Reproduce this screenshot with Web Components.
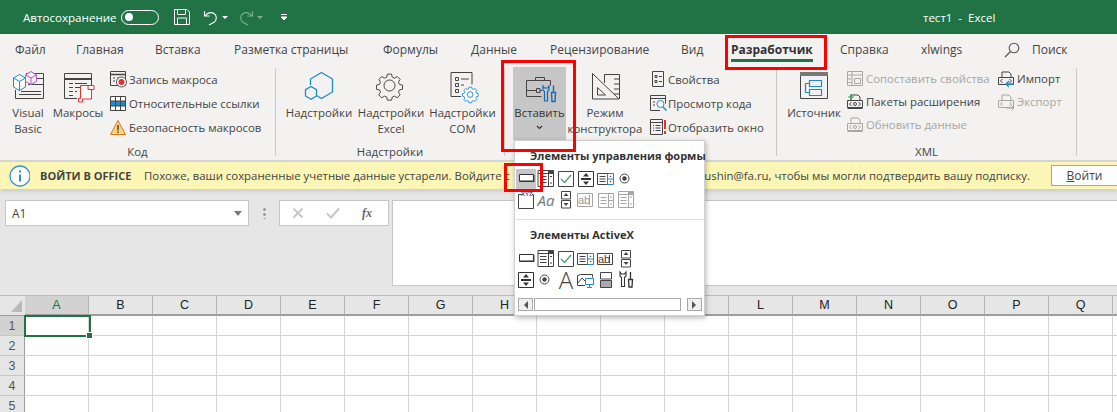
<!DOCTYPE html>
<html lang="ru">
<head>
<meta charset="utf-8">
<title>тест1 - Excel</title>
<style>
  html, body { margin: 0; height: 412px; overflow: hidden; background: #e6e6e6; }
  body { font-family: "Open Sans", "Liberation Sans", sans-serif; position: relative; display: flex; flex-direction: column; }
</style>
</head>
<body>
<x-titlebar></x-titlebar>
<x-tabs></x-tabs>
<x-ribbon>
  <x-group label="Код" style="width:276px;padding-left:6px">
    <x-big style="width:44px"><x-icon slot="icon" name="vb" size="34"></x-icon>Visual<br>Basic</x-big>
    <x-big style="width:56px"><x-icon slot="icon" name="macros" size="34"></x-icon>Макросы</x-big>
    <x-list style="margin-left:4px">
      <x-small icon="record">Запись макроса</x-small>
      <x-small icon="relative">Относительные ссылки</x-small>
      <x-small icon="warn">Безопасность макросов</x-small>
    </x-list>
  </x-group>
  <x-group label="Надстройки" style="width:229px;padding-left:7px">
    <x-big style="width:72px"><x-icon slot="icon" name="addin" size="34"></x-icon>Надстройки</x-big>
    <x-big style="width:72px"><x-icon slot="icon" name="gear" size="34"></x-icon>Надстройки<br>Excel</x-big>
    <x-big style="width:71px"><x-icon slot="icon" name="com" size="34"></x-icon>Надстройки<br>COM</x-big>
  </x-group>
  <x-group label="" style="width:272px;padding-left:8px">
    <x-big active style="width:53px"><x-icon slot="icon" name="toolbox" size="34"></x-icon>Вставить<x-chevron></x-chevron></x-big>
    <x-big style="width:78px"><x-icon slot="icon" name="ruler" size="34"></x-icon>Режим<br>конструктора</x-big>
    <x-list style="margin-left:6px">
      <x-small icon="props" tight>Свойства</x-small>
      <x-small icon="viewcode" tight>Просмотр кода</x-small>
      <x-small icon="dialog" tight>Отобразить окно</x-small>
    </x-list>
  </x-group>
  <x-group label="XML" style="width:300px;padding-left:4px">
    <x-big style="width:66px"><x-icon slot="icon" name="source" size="34"></x-icon>Источник</x-big>
    <x-list dense style="width:151px">
      <x-small icon="mapprops" off>Сопоставить свойства</x-small>
      <x-small icon="packs">Пакеты расширения</x-small>
      <x-small icon="refresh" off>Обновить данные</x-small>
    </x-list>
    <x-list dense>
      <x-small icon="import">Импорт</x-small>
      <x-small icon="export" off>Экспорт</x-small>
    </x-list>
  </x-group>
</x-ribbon>
<x-msgbar></x-msgbar>
<x-formulabar></x-formulabar>
<x-sheet></x-sheet>
<x-dropdown></x-dropdown>
<x-mark style="left:725px;top:35px;width:96px;height:29px"></x-mark>
<x-mark style="left:501px;top:60px;width:69px;height:86px"></x-mark>
<x-mark style="left:504px;top:163px;width:33px;height:23px"></x-mark>

<script>
const S = 'fill="none" stroke="#444" stroke-width="1"';
const G = 'fill="none" stroke="#a6a6a6" stroke-width="1"';
const ICONS = {
  vb: `<g ${S}><path d="M15 2.500h17.500v25H4.500V19"/><path d="M26 7.500h6.500M17 13.500h15M8 23.500h22M10 20.500h20"/></g>
       <path d="M2.500 7l6-3.500 6 3.500v9l-6 3.500-6-3.500zM2.500 7l6 3.500 6-3.500M8.500 10.500v9" fill="#fff" stroke="#1e8bcd"/>
       <path d="M14.500 4L20 .5 25.500 4v6.500l-5.500 3-5.500-3zM14.500 4l5.500 3 5.500-3M20 7v6.500" fill="#f3f2f1" stroke="#b458c4"/>`,
  macros: `<g ${S}><path d="M16 27.500H3.500V2.500h27v12"/><path d="M3.500 8h27" stroke-width="2"/><path d="M8 12.500h4M14 12.500h12M8 16.500h4M14 16.500h7M8 20.500h4M14 20.500h2M8 24.500h4"/></g>
       <path d="M19.500 14.500h13.500v4h-2.500v9.500h-9v3h-4v-3.500h2zM27 14.500v4h6" fill="#fff" stroke="#e8322c"/>`,
  record: `<g ${S}><path d="M.5 .5h15v14h-15z"/><path d="M.5 3.500h15" stroke-width="1.500"/><path d="M3 7h2M3 10h2M7 7h3"/></g><circle cx="11.500" cy="11" r="5" fill="#fff" stroke="#555"/><circle cx="11.500" cy="11" r="3" fill="#e8322c"/>`,
  relative: `<path d="M.5 1.500h15v14H.5z" fill="#fff"/><path d="M.5 6h15v5H.5z" fill="#1e8bcd"/><path d="M.5 1.500h15v14H.5zM.5 6h15M.5 11h15M5.500 1.500v14M10.500 1.500v14" fill="none" stroke="#444"/>`,
  warn: `<path d="M8 1.500l7.500 14H.5z" fill="#fcd77f" stroke="#d67a1c" stroke-linejoin="round"/><path d="M8 6v5.500M8 12.500v1.500" stroke="#444" stroke-width="1.500"/>`,
  addin: `<path d="M19.500 1.500l11 6.500v13l-11 6.500-5.500-3.200M8.500 14V8l11-6.500" fill="none" stroke="#1e8bcd" stroke-width="1.300"/><path d="M9 15.500l5.500 3.200v6.300L9 28.200 3.500 25v-6.300z" fill="#f3f2f1" stroke="#1e8bcd" stroke-width="1.300"/>`,
  gear: `<path d="M14.500 3.500h5l.8 3.700 2.700 1.100 3.200-2 3.500 3.500-2 3.200 1.100 2.700 3.700.8v5l-3.700.8-1.100 2.700 2 3.200-3.500 3.500-3.200-2-2.700 1.100-.8 3.700h-5l-.8-3.700-2.700-1.100-3.200 2-3.500-3.500 2-3.200-1.100-2.700-3.700-.8v-5l3.700-.8 1.100-2.700-2-3.200 3.500-3.500 3.200 2 2.700-1.100z" transform="translate(1.200 .2) scale(.84)" fill="none" stroke="#444" stroke-width="1.150"/><circle cx="15.500" cy="14.500" r="5.500" fill="none" stroke="#444"/>`,
  com: `<g ${S}><path d="M15 25.500H5V1.500h21v12"/><path d="M9.500 6.500h3v3h-3zM9.500 12.500h3v3h-3zM9.500 18.500h3v3h-3zM15 8h8M15 14h3"/></g>
       <path d="M22.500 15.500h3l.5 2 1.500.6 1.800-1 2 2-1 1.800.6 1.500 2 .5v3l-2 .5-.6 1.500 1 1.800-2 2-1.800-1-1.500.6-.5 2h-3l-.5-2-1.500-.6-1.800 1-2-2 1-1.800-.6-1.500-2-.5v-3l2-.5.6-1.500-1-1.800 2-2 1.800 1 1.500-.6z" transform="translate(3.200 2.500) scale(.88)" fill="#fff" stroke="#1e8bcd"/><circle cx="24.200" cy="23.500" r="2.800" fill="none" stroke="#1e8bcd"/>`,
  toolbox: `<g ${S}><path d="M3.500 9.500h24v5M3.500 9.500v16h15"/><path d="M12.500 9.500v-3h9v3"/><path d="M13.500 17.500h3.500v4h-3.500zM3.500 19.500h10M17 19.500h2"/></g>
       <path d="M20 15v4l1.500 1.500V30h3V20.500L26 19v-4l-1.500 2h-3z" fill="#c6c6c6" stroke="#0f6cbd" stroke-width="1.200"/>
       <path d="M30.500 14.500v7M28.500 21.500h4l-.5 9h-3z" fill="#c6c6c6" stroke="#0f6cbd" stroke-width="1.400"/>`,
  ruler: `<g ${S}><path d="M4.500 2.500L31 28H4.500z"/><path d="M9.500 16.500l8 7.500h-8z"/><path d="M16.500 12V3.500h15V28M26 8h5.500M26 13h5.500M26 18h5.500M26 23h5.500"/></g>`,
  props: `<g ${S}><path d="M2.500 .5h11v15h-11z"/><path d="M5 4.500h2v2H5zM9 5.500h3M5 9.500h2v2H5zM9 10.500h3"/></g>`,
  viewcode: `<g ${S}><path d="M10 15.500H.5V.5h15v8"/><path d="M.5 3.500h15M3 7h2M3 10h2" /></g><circle cx="10.500" cy="9" r="3.500" fill="#fff" stroke="#1e8bcd"/><path d="M13 12l3.500 3.500" stroke="#1e8bcd" stroke-width="1.500"/>`,
  dialog: `<g ${S}><path d="M.5 .5h12v15H.5zM.5 3.500h12M3 6.500h1M5.500 6.500h5M3 9h1M5.500 9h5M3 11.500h1M5.500 11.500h5"/></g><path d="M15 1v9M15 12v3" stroke="#e8322c" stroke-width="2"/>`,
  source: `<g transform="translate(2 0)"><path d="M1.500 1.500h27v26h-27z" fill="none" stroke="#444"/><path d="M1 1h28v4H1z" fill="#777"/><path d="M10.500 9.500h12v6h-12zM10.500 18.500h12v6h-12zM10.500 12.500H6.500v9h4" fill="none" stroke="#1e8bcd" stroke-width="1.200"/></g>`,
  mapprops: `<g ${G}><path d="M.5 1.500h15v14H.5zM.5 5h15M5 1.500v14M.5 9h4M.5 12.500h4M7.500 8.500h6v5h-6z"/></g>`,
  packs: `<g ${S}><path d="M.5 7.500h15v7H.5zM4 7.500V2h7l2 2v3.500M.5 15.500h15"/><path d="M4.500 9l-2 2 2 2M11.500 9l2 2-2 2"/></g><circle cx="8" cy="11" r="1.500" fill="none" stroke="#444"/><path d="M1 4h6M4 1v6" stroke="#2e9e4f" stroke-width="1.200"/>`,
  refresh: `<g ${G}><path d="M.5 7.500h15v7H.5zM4 7.500V2h7l2 2v3.500M.5 15.500h15"/><path d="M4.500 9l-2 2 2 2M11.500 9l2 2-2 2"/></g><circle cx="8" cy="11" r="1.500" fill="none" stroke="#a6a6a6"/>`,
  import: `<g ${S}><path d="M.5 7.500h15v7H.5zM4 7.500V2h7l2 2v3.500"/><path d="M4.500 9l-2 2 2 2M11.500 9l2 2-2 2"/></g><path d="M16 14H8M11 11l-3 3 3 3" fill="none" stroke="#1e8bcd" stroke-width="1.300"/>`,
  export: `<g ${G}><path d="M.5 7.500h15v7H.5zM4 7.500V2h7l2 2v3.500"/><path d="M4.500 9l-2 2 2 2M11.500 9l2 2-2 2"/><path d="M8 15h8M13.500 12.500l2.500 2.500-2.500 2.500"/></g>`,
  save: `<path d="M.5.5h12.500l2.500 2.500v12.500H.5zM3.500.5v5h8v-5M3.500 15.500v-6.500h9v6.500" fill="none" stroke="#fff"/>`,
  undo: `<path d="M1.500 2v5h5M2 7c2-3 6-4.500 9-2.500 3 2 3 6 .5 8.500L6 16" fill="none" stroke="#fff" stroke-width="1.100"/>`,
  redo: `<path d="M14.500 2v5h-5M14 7c-2-3-6-4.500-9-2.500-3 2-3 6-.5 8.500L10 16" fill="none" stroke="#7fae96" stroke-width="1.100"/>`,
  search: `<circle cx="10" cy="6" r="4.800" fill="none" stroke="#555" stroke-width="1.100"/><path d="M6.500 9.500L1 15" stroke="#555" stroke-width="1.300"/>`,
  // form controls, 18px box
  button: `<path d="M2.500 4.500h14v7h-14z" fill="#fff" stroke="#333"/><path d="M3 11.200h13.700V5" fill="none" stroke="#333" stroke-width="1.500"/>`,
  combo: `<g ${S}><path d="M1 .5h15.500v16H1zM1 3.500h15.500M11.500 .5v16M3 6.500h6.500M3 9.500h6.500M3 12.500h6.500"/><path d="M13 6.500h2M13 13h2"/></g><path d="M11.500.5h5v3h-5z" fill="#444"/>`,
  check: `<path d="M1.500 1.500h15v15h-15z" fill="#fff" stroke="#444"/><path d="M4 9l3.500 3.500L14 5" fill="none" stroke="#4aa564" stroke-width="1.300"/>`,
  spin: `<path d="M1.500 1.500h15v15h-15z" fill="#fff" stroke="#333"/><path d="M4 9h10" stroke="#333" stroke-width="2"/><path d="M9 3l3 3.500H6zM9 15l3-3.500H6z" fill="#333"/>`,
  listb: `<g ${S}><path d="M.5 3.500h10v11H.5zM2.500 6.500h6M2.500 9h6M2.500 11.500h6"/></g><path d="M10.500 3.500h6v11h-6zM10.500 9h6" fill="none" stroke="#1e8bcd"/><path d="M12.500 7l1-1.500 1 1.500zM12.500 11l1 1.500 1-1.500z" fill="#444"/>`,
  radio: `<circle cx="7.500" cy="8.500" r="4.500" fill="none" stroke="#444"/><circle cx="7.500" cy="8.500" r="2.200" fill="#444"/>`,
  label: `<path d="M5 3.500H1.500v14h15v-14H15" fill="none" stroke="#444"/>`,
  spin2: `<g ${S}><path d="M4.500 .5h9v7.500h-9zM4.500 9.500h9v7.500h-9z"/></g><path d="M9 2l2.500 3h-5zM9 15l2.500-3h-5z" fill="#444"/>`,
  abl: `<path d="M.5 2.500h15v13H.5z" fill="none" stroke="#a6a6a6"/><path d="M12.500 4v10" stroke="#a6a6a6"/>`,
  abl2: `<path d="M.5 3.500h15v11H.5z" fill="none" stroke="#444"/><path d="M12.500 5v8" stroke="#444"/>`,
  listg: `<g ${G}><path d="M1.500 2.500h15v14h-15zM11.500 2.500v14M3.500 6.500h6M3.500 9.500h6M3.500 12.500h6M13 6h2M13 13h2M11.500 9.500h5"/></g>`,
  combog: `<g ${G}><path d="M1.500 .5h15v16h-15zM1.500 3.500h15M11.500 .5v16M3.500 6.500h6M3.500 9.500h6M3.500 12.500h6M13 6h2M13 13h2"/></g><path d="M11.500.5h5v3h-5z" fill="#a6a6a6"/>`,
  image: `<path d="M8 14.500H.5v-10l3-1h12v3" fill="none" stroke="#444"/><path d="M1 12l4-5 3 3" fill="none" stroke="#444"/><path d="M8.500 7.500h8v6h-8z" fill="#fff" stroke="#1e8bcd"/><path d="M12.500 13.500v2.500M10 16.500h5" stroke="#1e8bcd"/>`,
  toggle: `<path d="M3 9h12v7.500H3z" fill="#aaa"/><path d="M3.500 1.500h11v6.500h-11zM3.500 9.500h11v7h-11z" fill="none" stroke="#444"/>`,
  tools: `<path d="M3 1v4l1.500 1.500v9h3v-9L9 5V1L7.500 3h-3z" fill="none" stroke="#333" stroke-width="1.100"/><path d="M13.500 1v7M11.500 8.500h4l-.5 7.500h-3z" fill="none" stroke="#333" stroke-width="1.300"/>`
};

// renders an icon from the table above, box is 16px unless size says otherwise
class XIcon extends HTMLElement {
  constructor(){
    super();
    this.attachShadow({mode:'open'});
  }
  connectedCallback(){
    const box = this.getAttribute('box') || (this.getAttribute('size') || 16);
    const size = this.getAttribute('size') || 16;
    this.shadowRoot.innerHTML = `
      <style>
        :host{display:block;width:${size}px;height:${size}px;flex:none}
        svg{display:block;overflow:visible}
      </style>
      <svg width="${size}" height="${size}" viewBox="0 0 ${box} ${box}">${ICONS[this.getAttribute('name')] || ''}</svg>`;
  }
}
customElements.define('x-icon', XIcon);

class XTitlebar extends HTMLElement {
  constructor(){
    super();
    this.attachShadow({mode:'open'});
    this.shadowRoot.innerHTML = `
      <style>
        :host{display:flex;align-items:center;height:34px;background:#217346;color:#fff;font-size:11.600px;flex:none;padding-left:23px;box-sizing:border-box}
        .auto{width:98px;white-space:nowrap}
        .switch{width:38px;height:15px;border:1px solid #fff;border-radius:9px;box-sizing:border-box;margin-right:15px;display:flex;align-items:center;padding-left:3px}
        .switch i{width:8px;height:8px;border-radius:50%;background:#fff}
        .tip{width:0;height:0;border:3px solid transparent;border-top:3px solid #fff;margin-top:3px}
        .tip.dim{border-top-color:#7fae96}
        .title{margin-left:auto;width:194px;white-space:pre;font-size:11.500px}
      </style>
      <span class="auto">Автосохранение</span>
      <span class="switch"><i></i></span>
      <x-icon name="save"></x-icon>
      <x-icon name="undo" style="margin-left:13px"></x-icon>
      <span class="tip" style="margin-left:3px"></span>
      <x-icon name="redo" style="margin-left:10px"></x-icon>
      <span class="tip dim" style="margin-left:3px"></span>
      <svg width="8" height="8" style="margin-left:17px"><path d="M1 1.500h6M1 4l3 3 3-3z" fill="#fff" stroke="#fff"/></svg>
      <span class="title">тест1  -  Excel</span>`;
  }
}
customElements.define('x-titlebar', XTitlebar);

class XTabs extends HTMLElement {
  constructor(){
    super();
    this.attachShadow({mode:'open'});
    const tabs = [['Файл',61],['Главная',79],['Вставка',79],['Разметка страницы',149],['Формулы',88],['Данные',79],['Рецензирование',131],['Вид',50],['Разработчик',109],['Справка',81],['xlwings',84]];
    this.shadowRoot.innerHTML = `
      <style>
        :host{display:flex;align-items:flex-start;height:32px;background:#f3f2f1;color:#444;font-size:12px;padding:7px 0 0 15px;box-sizing:border-box;flex:none}
        span{white-space:nowrap;flex:none;display:block;height:24px}
        .on{font-weight:700;color:#333;position:relative}
        .on::after{content:"";position:absolute;left:0;width:82px;top:18px;height:3px;background:#217346}
        .find{margin-left:-1px;margin-right:12px;margin-top:1px}
      </style>
      ${tabs.map(t=>`<span style="width:${t[1]}px" class="${t[0]=='Разработчик'?'on':''}">${t[0]}</span>`).join('')}
      <x-icon name="search" class="find"></x-icon><span>Поиск</span>`;
  }
}
customElements.define('x-tabs', XTabs);

class XRibbon extends HTMLElement {
  constructor(){
    super();
    this.attachShadow({mode:'open'});
    this.shadowRoot.innerHTML = `
      <style>:host{display:flex;height:94px;background:#f3f2f1;border-bottom:2px solid #d6d6d6;flex:none;color:#444;font-size:11.400px}</style>
      <slot></slot>`;
  }
}
customElements.define('x-ribbon', XRibbon);

class XGroup extends HTMLElement {
  constructor(){
    super();
    this.attachShadow({mode:'open'});
    this.shadowRoot.innerHTML = `
      <style>
        :host{display:flex;position:relative;box-sizing:border-box;height:88px;margin-top:2px;border-right:1px solid #c8c8c8;flex:none}
        .row{display:flex;align-items:flex-start;height:72px}
        .name{position:absolute;left:0;right:0;bottom:-3px;text-align:center;font-size:11.400px}
      </style>
      <div class="row"><slot></slot></div>
      <div class="name"></div>`;
  }
  connectedCallback(){
    this.shadowRoot.querySelector('.name').textContent = this.getAttribute('label');
  }
}
customElements.define('x-group', XGroup);

class XBig extends HTMLElement {
  constructor(){
    super();
    this.attachShadow({mode:'open'});
    this.shadowRoot.innerHTML = `
      <style>
        :host{display:flex;flex-direction:column;align-items:center;height:73px;box-sizing:border-box;padding-top:3px;text-align:center;line-height:16px;flex:none;white-space:nowrap}
        :host([active]){background:#c6c6c6;color:#333;margin-top:-1px;padding-top:4px}
        .ic{height:34px;margin-bottom:0}
      </style>
      <div class="ic"><slot name="icon"></slot></div>
      <div><slot></slot></div>`;
  }
}
customElements.define('x-big', XBig);

class XChevron extends HTMLElement {
  constructor(){
    super();
    this.attachShadow({mode:'open'});
    this.shadowRoot.innerHTML = `
      <style>:host{display:block;height:13px}svg{display:block;margin:4px auto 0}</style>
      <svg width="7" height="5"><path d="M1 1l2.500 2.500L6 1" fill="none" stroke="#333" stroke-width="1.200"/></svg>`;
  }
}
customElements.define('x-chevron', XChevron);

class XList extends HTMLElement {
  constructor(){
    super();
    this.attachShadow({mode:'open'});
    this.shadowRoot.innerHTML = `
      <style>
        :host{display:flex;flex-direction:column;gap:8px;padding-top:3px;flex:none;margin-left:3px}
        :host([dense]){gap:7px;padding-top:2px;margin-left:0}
      </style>
      <slot></slot>`;
  }
}
customElements.define('x-list', XList);

class XSmall extends HTMLElement {
  constructor(){
    super();
    this.attachShadow({mode:'open'});
  }
  connectedCallback(){
    this.shadowRoot.innerHTML = `
      <style>
        :host{display:flex;align-items:center;gap:3px;height:16px;white-space:nowrap;color:#444}
        :host([tight]){gap:2px}
        :host([off]){color:#a6a6a6}
      </style>
      <x-icon name="${this.getAttribute('icon')}"></x-icon><span><slot></slot></span>`;
  }
}
customElements.define('x-small', XSmall);

class XMsgbar extends HTMLElement {
  constructor(){
    super();
    this.attachShadow({mode:'open'});
    this.shadowRoot.innerHTML = `
      <style>
        :host{display:flex;align-items:center;height:27px;background:#fbf6b5;color:#444;font-size:11.400px;flex:none;box-shadow:0 2px 5px #c8c8c8;position:relative;padding-left:9px;box-sizing:border-box;white-space:nowrap}
        b{margin-left:10px;width:104px;flex:none;font-size:11px}
        .txt{width:886px;display:flex;justify-content:space-between;flex:none}
        .btn{margin-left:21px;width:66px;height:21px;background:#fff;border:1px solid #a6a6a6;border-right:0;box-sizing:border-box;text-align:center;font-size:12px;line-height:19px;flex:none}
      </style>
      <svg width="22" height="22"><circle cx="11" cy="11" r="10" fill="#fff" stroke="#3a96dd" stroke-width="1.300"/><path d="M11 9.500v7M11 5.500v2" stroke="#1e7ec8" stroke-width="1.800"/></svg>
      <b>ВОЙТИ В OFFICE</b>
      <div class="txt"><span>Похоже, ваши сохраненные учетные данные устарели. Войдите с</span><span>ushin@fa.ru, чтобы мы могли подтвердить вашу подписку.</span></div>
      <div class="btn"><u>В</u>ойти</div>`;
  }
}
customElements.define('x-msgbar', XMsgbar);

class XFormulabar extends HTMLElement {
  constructor(){
    super();
    this.attachShadow({mode:'open'});
    this.shadowRoot.innerHTML = `
      <style>
        :host{display:flex;align-items:flex-start;height:107px;padding:11px 0 0 5px;box-sizing:border-box;background:#e6e6e6;flex:none;color:#444;font-size:12px}
        .box{background:#fff;border:1px solid #c6c6c6;box-sizing:border-box;height:26px;display:flex;align-items:center}
        .name{width:244px;padding:0 6px;justify-content:space-between}
        .tip{width:0;height:0;border:4px solid transparent;border-top:5px solid #777;margin-top:4px}
        .dots{width:3px;height:12px;margin:7px 13px 0 14px;background:radial-gradient(circle,#999 1.300px,transparent 1.500px) 0 0/3px 5px}
        .fx{width:110px;padding-left:12px;gap:22px;font:italic 700 12px "Liberation Serif",serif;color:#666}
        .input{height:86px;flex:1;margin-left:3px;border-right:0}
      </style>
      <div class="box name"><span>A1</span><i class="tip"></i></div>
      <div class="dots"></div>
      <div class="box fx">
        <svg width="12" height="12"><path d="M1.500 1.500l9 9M10.500 1.500l-9 9" stroke="#c6c6c6" stroke-width="1.800"/></svg>
        <svg width="14" height="12"><path d="M1 6.500l4 4 8-9" fill="none" stroke="#c6c6c6" stroke-width="2"/></svg>
        <span>fx</span>
      </div>
      <div class="box input"></div>`;
  }
}
customElements.define('x-formulabar', XFormulabar);

class XSheet extends HTMLElement {
  constructor(){
    super();
    this.attachShadow({mode:'open'});
    const cols = 'ABCDEFGHIJKLMNOPQ'.split('');
    let cells = `<div class="hd corner"><svg width="12" height="12"><path d="M11 0v12H0z" fill="#b9b9b9"/></svg></div>`;
    cells += cols.map((c,i)=>`<div class="hd col ${i==0?'sel':''}">${c}</div>`).join('') + '<div class="hd col"></div>';
    for (let r=1;r<=5;r++){
      cells += `<div class="hd rh ${r==1?'sel':''}">${r}</div>`;
      for (let c=0;c<=cols.length;c++) cells += `<div class="cell"></div>`;
    }
    this.shadowRoot.innerHTML = `
      <style>
        :host{display:block;position:relative;height:116px;overflow:hidden;background:#fff;font-size:12px;color:#333;flex:1;box-shadow:0 -1px 0 #bbb}
        .grid{display:grid;grid-template-columns:25px repeat(18,64px);grid-template-rows:21px repeat(5,20px);margin-top:-1px}
        .grid>div{box-sizing:border-box}
        .hd{background:#e6e6e6;display:flex;align-items:center;justify-content:center;padding-top:1px;color:#222;font-family:"Liberation Sans",sans-serif;font-size:12.500px}
        .corner{border-bottom:1px solid #9e9e9e;justify-content:flex-end;align-items:flex-end;padding:0 2px 3px 0}
        .col{border-right:1px solid #b4b4b4;border-bottom:2px solid #9e9e9e}
        .rh{border-bottom:1px solid #c6c6c6;border-right:1px solid #9e9e9e;color:#555}
        .sel{background:#d2d2d2;color:#217346}
        .rh.sel{color:#555}
        .cell{border-right:1px solid #d4d4d4;border-bottom:1px solid #d4d4d4}
        .cur{position:absolute;left:24px;top:19px;width:67px;height:22px;border:2px solid #217346;box-sizing:border-box}
        .cur::after{content:"";position:absolute;right:-4px;bottom:-4px;width:5px;height:5px;background:#217346;border:1px solid #fff}
      </style>
      <div class="grid">${cells}</div>
      <div class="cur"></div>`;
  }
}
customElements.define('x-sheet', XSheet);

class XDropdown extends HTMLElement {
  constructor(){
    super();
    this.attachShadow({mode:'open'});
    const cell = (n, hot) => `<span class="cell ${hot?'hot':''}">${this._glyph(n)}</span>`;
    const row = list => `<div class="row">${list.map(n=>cell(n, n=='button*')).join('')}</div>`;
    this.shadowRoot.innerHTML = `
      <style>
        :host{position:absolute;left:514px;top:140px;width:191px;height:176px;background:#fff;border:1px solid #d0d0d0;box-sizing:border-box;box-shadow:1px 2px 5px rgba(0,0,0,.28);color:#333;font-size:11px;padding-left:1px}
        h4{margin:0;font-size:11px;font-weight:700;padding-left:14px;line-height:16px;color:#333;white-space:nowrap;box-sizing:border-box}
        .t1{padding-top:7px;height:28px}
        .t2{padding-top:7px;height:29px}
        .row{display:flex;height:21px}
        .cell{width:20px;height:20px;display:flex;align-items:center;justify-content:center;flex:none;position:relative}
        .hot{background:#c6c6c6}
        hr{border:0;border-top:1px solid #e1e1e1;margin:8px 0 0 0}
        .txt{font:italic 15px "Open Sans",sans-serif;color:#777;line-height:18px}
        .bigA{font:300 24px "Open Sans",sans-serif;color:#444;line-height:20px}
        .abl{position:absolute;left:2px;top:5px;font:11px "Liberation Sans",sans-serif;color:#999;line-height:11px}
        .abl.dk{color:#444}
        .az{position:absolute;left:5px;top:1px;font:bold 6px "Liberation Sans",sans-serif;color:#555;line-height:7px}
        .bar{display:flex;align-items:stretch;height:13px;margin:7px 2px 0 2px;gap:1px}
        .bar i{border:1px solid #aaa;display:flex;align-items:center;justify-content:center;box-sizing:border-box}
        .arr{width:15px;background:#f0f0f0}
        .mid{flex:1;background:#fff;margin:0 5px 0 0}
      </style>
      <h4 class="t1">Элементы управления формы</h4>
      ${row(['button*','combo','check','spin','listb','radio'])}
      ${row(['label','Aa','spin2','abl','listg','combog'])}
      <hr>
      <h4 class="t2">Элементы ActiveX</h4>
      ${row(['button','combo','check','listb','abl2','spin2'])}
      ${row(['spin','radio','A','image','toggle','tools'])}
      <div class="bar">
        <i class="arr"><svg width="5" height="8"><path d="M5 0v8L1 4z" fill="#555"/></svg></i>
        <i class="mid"></i>
        <i class="arr"><svg width="5" height="8"><path d="M0 0v8l4-4z" fill="#555"/></svg></i>
      </div>`;
  }
  _glyph(n){
    n = n.replace('*','');
    if (n=='Aa') return '<span class="txt">Aa</span>';
    if (n=='A') return '<span class="bigA">A</span>';
    let extra = '';
    if (n=='abl') extra = '<span class="abl">ab</span>';
    if (n=='abl2') extra = '<span class="abl dk">ab</span>';
    if (n=='label') extra = '<span class="az">XYZ</span>';
    return `<x-icon name="${n}" box="18" size="18"></x-icon>${extra}`;
  }
}
customElements.define('x-dropdown', XDropdown);

// the red annotation frames drawn over the screenshot
class XMark extends HTMLElement {
  constructor(){
    super();
    this.attachShadow({mode:'open'});
    this.shadowRoot.innerHTML = `<style>:host{display:block;position:absolute;border:3px solid #f00;box-sizing:content-box;pointer-events:none}</style>`;
  }
}
customElements.define('x-mark', XMark);
</script>
</body>
</html>
